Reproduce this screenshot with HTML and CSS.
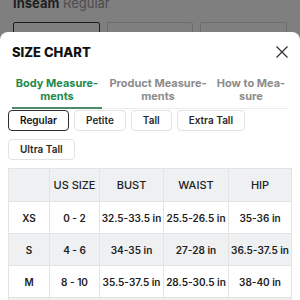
FILE: index.html
```html
<!DOCTYPE html>
<html lang="en">
<head>
  <meta charset="UTF-8">
  <title>Size Chart</title>
  <link rel="stylesheet" href="styles.css">
</head>
<body>
  <!-- dimmed product page behind the sheet -->
  <div class="backdrop">
    <div class="inseam"><b>Inseam</b> <span>Regular</span></div>
    <div class="inseam-options">
      <div class="opt selected"></div>
      <div class="opt"></div>
      <div class="opt"></div>
    </div>
  </div>

  <div class="sheet">
    <div class="sheet-header">
      <h1>SIZE CHART</h1>
      <svg class="close" width="12" height="12" viewBox="0 0 12 12">
        <path d="M0.5 0.5 L11.5 11.5 M11.5 0.5 L0.5 11.5" stroke="#333" stroke-width="1.3" fill="none"/>
      </svg>
    </div>

    <div class="tabs">
      <div class="tab active">Body Measure-<br>ments</div>
      <div class="tab">Product Measure-<br>ments</div>
      <div class="tab">How to Mea-<br>sure</div>
    </div>

    <div class="fits">
      <div class="fit selected">Regular</div>
      <div class="fit">Petite</div>
      <div class="fit">Tall</div>
      <div class="fit">Extra Tall</div>
      <div class="fit">Ultra Tall</div>
    </div>

    <table class="chart">
      <tr class="head">
        <td></td>
        <td>US SIZE</td>
        <td>BUST</td>
        <td>WAIST</td>
        <td>HIP</td>
      </tr>
      <tr>
        <td>XS</td>
        <td>0 - 2</td>
        <td>32.5-33.5 in</td>
        <td>25.5-26.5 in</td>
        <td>35-36 in</td>
      </tr>
      <tr class="shade">
        <td>S</td>
        <td>4 - 6</td>
        <td>34-35 in</td>
        <td>27-28 in</td>
        <td>36.5-37.5 in</td>
      </tr>
      <tr>
        <td>M</td>
        <td>8 - 10</td>
        <td>35.5-37.5 in</td>
        <td>28.5-30.5 in</td>
        <td>38-40 in</td>
      </tr>
      <tr class="shade">
        <td>L</td>
        <td>12 - 14</td>
        <td>38-40 in</td>
        <td>31-33 in</td>
        <td>40.5-42.5 in</td>
      </tr>
    </table>
  </div>
</body>
</html>
```

FILE: styles.css
```css
html, body {
  height: 100%;
  overflow: hidden;
}
body {
  margin: 0;
  background: #7f7f7f;
  font-family: Inter, "Liberation Sans", Arial, sans-serif;
  color: #222;
}
.backdrop {
  height: 32px;
  overflow: hidden;
  padding: 0 13px;
  box-sizing: border-box;
}
.inseam {
  font-size: 13px;
  line-height: 13px;
  margin-top: -3px;
  color: #1e1e1e;
}
.inseam span {
  color: #4c4c4c;
}
.inseam-options {
  display: flex;
  gap: 7px;
  margin-top: 12px;
}
.opt {
  width: 87px;
  height: 30px;
  border: 1px solid #6c6c6c;
  border-radius: 2px;
  box-sizing: border-box;
}
.opt.selected {
  border-color: #1c1c1c;
}
.sheet {
  background: #fff;
  border-radius: 8px 8px 0 0;
  height: 268px;
  overflow: hidden;
}
.sheet-header {
  height: 40px;
  display: flex;
  align-items: center;
  justify-content: space-between;
  padding: 0 12px;
}
h1 {
  margin: 0;
  font-size: 13px;
  font-weight: 800;
  color: #111;
}
.tabs {
  display: grid;
  grid-template-columns: 90px 112px 1fr;
  margin: 0 12px;
  border-bottom: 1px solid #ececec;
}
.tab {
  text-align: center;
  font-size: 11px;
  font-weight: 700;
  line-height: 13px;
  padding: 5px 0 4px;
  color: #8c8c8c;
  border-bottom: 2px solid transparent;
  margin-bottom: -1px;
}
.tab.active {
  color: #1f8a4c;
  border-bottom-color: #4f8a66;
}
.fits {
  display: flex;
  flex-wrap: wrap;
  gap: 8px 5px;
  padding: 1px 8px 0;
  width: 250px;
}
.fit {
  height: 21px;
  line-height: 19px;
  box-sizing: border-box;
  padding: 0 11px;
  border: 1px solid #e2e2e2;
  border-radius: 4px;
  font-size: 10px;
  font-weight: 600;
  color: #2a2a2a;
}
.fit.selected {
  border-color: #2b2b2b;
  color: #111;
}
.chart {
  margin: 8px 0 0 8px;
  width: 284px;
  border-collapse: collapse;
  border: 1px solid #a9a9a9;
  table-layout: fixed;
  font-size: 10px;
  font-weight: 600;
}
.chart td {
  height: 31px;
  padding: 0;
  text-align: center;
  border: 1px solid #e3e3e3;
  white-space: nowrap;
}
.chart td:first-child { width: 40px; }
.chart td:nth-child(2) { width: 49px; }
.chart td:nth-child(3) { width: 63px; }
.chart td:nth-child(4) { width: 64px; }
.chart .head td {
  height: 32px;
  font-size: 11px;
  font-weight: 500;
}
.chart .head,
.chart .shade {
  background: #eef0f2;
}
```
